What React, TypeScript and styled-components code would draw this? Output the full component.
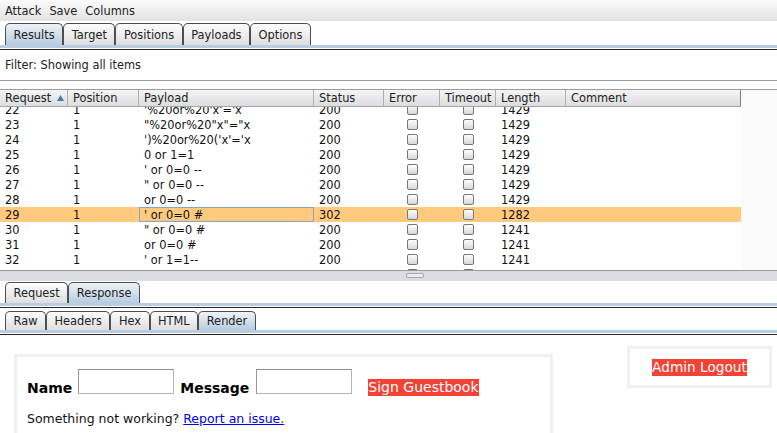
import React from "react";
import styled, { createGlobalStyle } from "styled-components";

const GlobalStyle = createGlobalStyle`
  html, body {
    margin: 0;
    padding: 0;
    background: #fff;
  }
  body {
    font-family: "DejaVu Sans", "Liberation Sans", sans-serif;
    font-size: 11.4px;
    color: #1e1e1e;
  }
  * {
    box-sizing: border-box;
  }
`;

const Root = styled.div`
  width: 777px;
  height: 433px;
  overflow: hidden;
  display: flex;
  flex-direction: column;
`;

const MenuBar = styled.div`
  height: 21px;
  flex: none;
  display: flex;
  align-items: center;
  padding-left: 1px;
  background: linear-gradient(#fbfbfb, #e2e2e2);
`;

const MenuItem = styled.span`
  padding: 0 4px;
  line-height: 20px;
  color: #222;
`;

const TabStrip = styled.div<{ $pad: number }>`
  flex: none;
  display: flex;
  padding: ${({ $pad }) => $pad}px 0 0 5px;
  background: #fff;
`;

const Tab = styled.div<{ $active?: boolean; $h: number }>`
  height: ${({ $h }) => $h}px;
  padding: 0 7.5px;
  display: flex;
  align-items: center;
  border: 1px solid #4e4e4e;
  border-bottom: none;
  border-radius: 5px 5px 0 0;
  color: #222;
  background: ${({ $active }) =>
    $active
      ? "linear-gradient(#eef2f6, #b7cce1)"
      : "linear-gradient(#fdfdfd, #dedede)"};
`;

const TabRule = styled.div`
  flex: none;
  height: 5px;
  background: linear-gradient(#b9cde2 0 3px, #fff 3px 4px, #262626 4px 5px);
`;

const FilterBar = styled.div`
  flex: none;
  height: 31px;
  padding-left: 5px;
  display: flex;
  align-items: center;
  border-bottom: 1px solid #9c9c9c;
  margin-bottom: 8px;
  color: #222;
`;

const TableArea = styled.div`
  flex: none;
  display: flex;
  border-top: 1px solid #9b9b9b;
  border-bottom: 1px solid #9b9b9b;
`;

const Grid = styled.div`
  width: 741px;
  flex: none;
`;

const Filler = styled.div`
  flex: 1;
  background: #fafafa;
`;

const HeaderRow = styled.div`
  display: flex;
  height: 17px;
  background: linear-gradient(#f4f4f5, #dcdde0);
  border-bottom: 1px solid #a4a4a4;
`;

const HeadCell = styled.div<{ $w: number; $last?: boolean }>`
  width: ${({ $w }) => $w}px;
  flex: none;
  padding-left: 5px;
  display: flex;
  align-items: center;
  color: #222;
  border-right: 1px solid ${({ $last }) => ($last ? "#7c7c7c" : "#b0b0b0")};
`;

const SortArrow = styled.svg`
  margin-left: 6px;
`;

const Body = styled.div`
  height: 163px;
  overflow: hidden;
  background: #fff;
`;

const Rows = styled.div`
  margin-top: -5px;
`;

const Row = styled.div<{ $sel?: boolean }>`
  display: flex;
  height: 15px;
  background: ${({ $sel }) => ($sel ? "#ffca7e" : "transparent")};
`;

const Cell = styled.div<{ $w: number; $focus?: boolean; $center?: boolean }>`
  width: ${({ $w }) => $w}px;
  height: 15px;
  flex: none;
  padding: ${({ $center }) => ($center ? "0" : "1px 0 0 5px")};
  line-height: 14px;
  white-space: pre;
  overflow: hidden;
  display: flex;
  align-items: center;
  justify-content: ${({ $center }) => ($center ? "center" : "flex-start")};
  color: #111;
  box-shadow: ${({ $focus }) => ($focus ? "inset 0 0 0 1px #8ba4c1" : "none")};
`;

const Check = styled.span`
  width: 11px;
  height: 11px;
  border: 1px solid #777;
  border-radius: 2px;
  background: linear-gradient(#ffffff, #d6d7da);
`;

const Splitter = styled.div`
  flex: none;
  height: 10px;
  padding: 2px 0 0 406px;
  background: #d9dce1;
`;

const Grip = styled.div`
  width: 18px;
  height: 5px;
  border: 1px solid #a2a7ae;
  border-radius: 2px;
  background: #e8eaed;
`;

const Render = styled.div`
  flex: 1;
  display: flex;
  justify-content: space-between;
  align-items: flex-start;
  background: #fff;
`;

const GuestBox = styled.div`
  margin: 19px 0 0 14px;
  width: 539px;
  min-height: 120px;
  border: 3px solid #f0f0f0;
  padding: 12px 10px;
`;

const FormRow = styled.div`
  display: flex;
  align-items: flex-end;
`;

const Label = styled.span<{ $gap: number }>`
  font-weight: 700;
  font-size: 14px;
  line-height: 16px;
  color: #000;
  margin: 0 ${({ $gap }) => $gap}px -2px 0;
`;

const Field = styled.input<{ $gap: number }>`
  width: 96px;
  height: 25px;
  padding: 0;
  margin: 0 ${({ $gap }) => $gap}px 0 0;
  background: #fff;
  border: 1px solid #b4b4b4;
  border-top-color: #8e8e8e;
  border-left-color: #9a9a9a;
`;

const RedButton = styled.span<{ $drop?: number; $size?: number }>`
  background: #f44336;
  color: #fff;
  font-size: ${({ $size }) => $size || 14}px;
  line-height: 17px;
  white-space: nowrap;
  margin-bottom: ${({ $drop }) => -($drop || 0)}px;
`;

const Note = styled.div`
  margin-top: 17px;
  font-size: 12.5px;
  line-height: 15px;
  color: #111;
`;

const Link = styled.a`
  color: #0000ee;
  text-decoration: underline;
`;

const AdminBox = styled.div`
  margin: 11px 5px 0 0;
  width: 145px;
  height: 42px;
  border: 3px solid #f0f0f0;
  display: flex;
  align-items: center;
  justify-content: center;
`;

const columns = [
  { key: "Request", w: 68 },
  { key: "Position", w: 71 },
  { key: "Payload", w: 175 },
  { key: "Status", w: 70 },
  { key: "Error", w: 56 },
  { key: "Timeout", w: 56 },
  { key: "Length", w: 70 },
  { key: "Comment", w: 175 },
];

const results = [
  { id: 22, payload: "'%20or%20'x'='x", status: 200, length: 1429 },
  { id: 23, payload: "\"%20or%20\"x\"=\"x", status: 200, length: 1429 },
  { id: 24, payload: "')%20or%20('x'='x", status: 200, length: 1429 },
  { id: 25, payload: "0 or 1=1", status: 200, length: 1429 },
  { id: 26, payload: "' or 0=0 --", status: 200, length: 1429 },
  { id: 27, payload: "\" or 0=0 --", status: 200, length: 1429 },
  { id: 28, payload: "or 0=0 --", status: 200, length: 1429 },
  { id: 29, payload: "' or 0=0 #", status: 302, length: 1282 },
  { id: 30, payload: "\" or 0=0 #", status: 200, length: 1241 },
  { id: 31, payload: "or 0=0 #", status: 200, length: 1241 },
  { id: 32, payload: "' or 1=1--", status: 200, length: 1241 },
  { id: 33, payload: "\" or 1=1--", status: 200, length: 1241 },
];

const App: React.FC = () => {
  return (
    <Root>
      <GlobalStyle />
      <MenuBar>
        <MenuItem>Attack</MenuItem>
        <MenuItem>Save</MenuItem>
        <MenuItem>Columns</MenuItem>
      </MenuBar>

      <TabStrip $pad={2}>
        {["Results", "Target", "Positions", "Payloads", "Options"].map((t, i) => (
          <Tab key={t} $h={22} $active={i === 0}>
            {t}
          </Tab>
        ))}
      </TabStrip>
      <TabRule />

      <FilterBar>Filter: Showing all items</FilterBar>

      <TableArea>
        <Grid>
          <HeaderRow>
            {columns.map((c, i) => (
              <HeadCell key={c.key} $w={c.w} $last={i === columns.length - 1}>
                {c.key}
                {i === 0 && (
                  <SortArrow width="7" height="6" viewBox="0 0 7 6">
                    <path d="M3.5 0 L7 6 L0 6 Z" fill="#4a7ab3" />
                  </SortArrow>
                )}
              </HeadCell>
            ))}
          </HeaderRow>
          <Body>
            <Rows>
              {results.map((r) => (
                <Row key={r.id} $sel={r.id === 29}>
                  <Cell $w={68}>{r.id}</Cell>
                  <Cell $w={71}>1</Cell>
                  <Cell $w={175} $focus={r.id === 29}>
                    {r.payload}
                  </Cell>
                  <Cell $w={70}>{r.status}</Cell>
                  <Cell $w={56} $center>
                    <Check />
                  </Cell>
                  <Cell $w={56} $center>
                    <Check />
                  </Cell>
                  <Cell $w={70}>{r.length}</Cell>
                  <Cell $w={175} />
                </Row>
              ))}
            </Rows>
          </Body>
        </Grid>
        <Filler />
      </TableArea>

      <Splitter>
        <Grip />
      </Splitter>

      <TabStrip $pad={1}>
        <Tab $h={21}>Request</Tab>
        <Tab $h={21} $active>
          Response
        </Tab>
      </TabStrip>
      <TabRule />

      <TabStrip $pad={3}>
        {["Raw", "Headers", "Hex", "HTML", "Render"].map((t) => (
          <Tab key={t} $h={19} $active={t === "Render"}>
            {t}
          </Tab>
        ))}
      </TabStrip>
      <TabRule />

      <Render>
        <GuestBox>
          <FormRow>
            <Label $gap={6}>Name</Label>
            <Field $gap={6} />
            <Label $gap={7}>Message</Label>
            <Field $gap={16} />
            <RedButton $drop={2}>Sign Guestbook</RedButton>
          </FormRow>
          <Note>
            Something not working? <Link href="#">Report an issue.</Link>
          </Note>
        </GuestBox>
        <AdminBox>
          <RedButton $size={13.7}>Admin Logout</RedButton>
        </AdminBox>
      </Render>
    </Root>
  );
};

export default App;
